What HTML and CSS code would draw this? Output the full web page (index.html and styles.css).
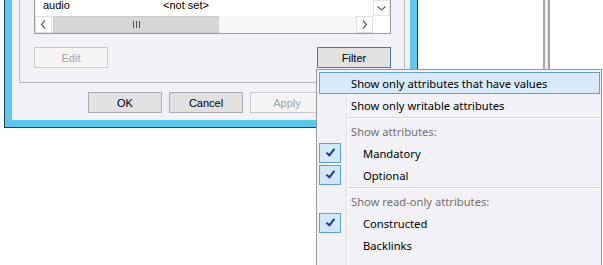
FILE: index.html
```html
<!DOCTYPE html>
<html lang="en">
<head>
    <meta charset="UTF-8">
    <title>Attribute Filter</title>
    <link rel="stylesheet" href="styles.css">
</head>
<body>

<div class="desk">
    <div class="dialog">
        <div class="client">
            <div class="page">
                <div class="list">
                    <div class="list-main">
                        <div class="rows">
                            <div class="row"><span class="col-name">audio</span><span class="col-value">&lt;not set&gt;</span></div>
                        </div>
                        <div class="hscroll">
                            <div class="sb-btn">
                                <svg width="7" height="9" viewBox="0 0 7 9"><polyline points="5,0.5 1.5,4.5 5,8.5" fill="none" stroke="#606060" stroke-width="1.2"/></svg>
                            </div>
                            <div class="sb-track">
                                <div class="sb-thumb">
                                    <svg width="7" height="7" viewBox="0 0 7 7"><path d="M0.5 0v7M3.5 0v7M6.5 0v7" stroke="#505050" stroke-width="1"/></svg>
                                </div>
                            </div>
                            <div class="sb-btn">
                                <svg width="7" height="9" viewBox="0 0 7 9"><polyline points="2,0.5 5.5,4.5 2,8.5" fill="none" stroke="#606060" stroke-width="1.2"/></svg>
                            </div>
                        </div>
                    </div>
                    <div class="vscroll">
                        <div class="sb-btn sb-down">
                            <svg width="9" height="7" viewBox="0 0 9 7"><polyline points="0.5,1.5 4.5,5 8.5,1.5" fill="none" stroke="#606060" stroke-width="1.2"/></svg>
                        </div>
                        <div class="sb-corner"></div>
                    </div>
                </div>
                <div class="page-btns">
                    <button class="btn" disabled>Edit</button>
                    <button class="btn btn-focus">Filter</button>
                </div>
            </div>
            <div class="dlg-btns">
                <button class="btn">OK</button>
                <button class="btn">Cancel</button>
                <button class="btn" disabled>Apply</button>
            </div>
        </div>
    </div>
    <div class="backbar"></div>
</div>

<div class="menu">
    <div class="item hot"><span class="check"></span><span class="label">Show only attributes that have values</span></div>
    <div class="item"><span class="check"></span><span class="label">Show only writable attributes</span></div>
    <div class="sep"></div>
    <div class="item header"><span class="check"></span><span class="label">Show attributes:</span></div>
    <div class="item"><span class="check on"></span><span class="label indent">Mandatory</span></div>
    <div class="item"><span class="check on"></span><span class="label indent">Optional</span></div>
    <div class="sep"></div>
    <div class="item header"><span class="check"></span><span class="label">Show read-only attributes:</span></div>
    <div class="item"><span class="check on"></span><span class="label indent">Constructed</span></div>
    <div class="item"><span class="check"></span><span class="label indent">Backlinks</span></div>
</div>

</body>
</html>
```

FILE: styles.css
```css
body {
    margin: 0;
    height: 265px;
    overflow: hidden;
    background: #fff;
    font-family: "Liberation Sans", Arial, sans-serif;
    font-size: 11px;
    color: #000;
}
.desk {
    display: flex;
    align-items: flex-start;
}

/* dialog window */
.dialog {
    box-sizing: border-box;
    width: 414px;
    height: 128px;
    margin-left: 4px;
    padding: 0 7px 7px;
    background: #5fc8ee;
    border: 1px solid #203f52;
    border-top: 0;
    display: flex;
}
.client {
    flex: 1;
    display: flex;
    flex-direction: column;
    justify-content: flex-end;
    padding: 0 5px 7px 7px;
    background: #f2f1f5;
}
.page {
    box-sizing: border-box;
    height: 83px;
    padding: 0 13px 14px 14px;
    border: 1px solid #bcbcbc;
    border-top: 0;
    display: flex;
    flex-direction: column;
}

/* list view */
.list {
    box-sizing: border-box;
    height: 34px;
    display: flex;
    background: #fff;
    border: 1px solid #9b9b9b;
    border-top: 0;
}
.list-main {
    flex: 1;
    min-width: 0;
    display: flex;
    flex-direction: column;
}
.rows {
    flex: 1;
}
.row {
    display: flex;
    line-height: 11px;
}
.col-name {
    width: 120px;
    margin-left: 8px;
}
.hscroll {
    height: 17px;
    display: flex;
}
.sb-btn {
    box-sizing: border-box;
    width: 17px;
    height: 17px;
    display: flex;
    align-items: center;
    justify-content: center;
    background: #fff;
    border: 1px solid #e2e2e2;
}
.sb-track {
    flex: 1;
    display: flex;
    background: #f7f7f7;
}
.sb-thumb {
    box-sizing: border-box;
    width: 166px;
    margin-left: 1px;
    display: flex;
    align-items: center;
    justify-content: center;
    background: #d6d6d6;
    border: 1px solid #cdcdcd;
}
.vscroll {
    width: 17px;
    display: flex;
    flex-direction: column;
}
.sb-down {
    height: 16px;
}
.sb-corner {
    flex: 1;
    background: #fff;
}

/* buttons */
.page-btns {
    display: flex;
    justify-content: space-between;
    margin-top: 13px;
}
.dlg-btns {
    display: flex;
    justify-content: flex-end;
    gap: 7px;
    margin-top: 9px;
    padding-right: 81px; /* Help button sits here, under the menu */
}
.btn {
    box-sizing: border-box;
    width: 74px;
    height: 21px;
    padding: 0;
    font: inherit;
    color: #000;
    background: #e1e1e1;
    border: 1px solid #adadad;
}
.btn:disabled {
    color: #a3a3a3;
    background: #f4f4f4;
    border-color: #c9c9c9;
}
.btn-focus {
    border-color: #3f7aa8;
}

.backbar {
    box-sizing: border-box;
    width: 7px;
    height: 265px;
    margin-left: 125px;
    background: #ececec;
    border-left: 2px solid #a9a9a9;
    border-right: 2px solid #a0a0a0;
}

/* context menu */
.menu {
    position: absolute;
    left: 316px;
    top: 69px;
    box-sizing: border-box;
    width: 286px;
    height: 196px;
    padding: 2px 1px 0 2px;
    overflow: hidden;
    background: #f2f1f5;
    border: 1px solid #979797;
    border-bottom: 0;
    font-family: "Noto Sans", "Open Sans", sans-serif;
    font-size: 11.2px;
}
.menu::before {
    content: "";
    position: absolute;
    left: 29px;
    top: 0;
    bottom: 0;
    width: 1px;
    background: #e0e0e2;
    box-shadow: 1px 0 #fff;
}
.item {
    position: relative;
    height: 22px;
    display: flex;
    align-items: center;
}
.item.hot {
    background: #d8eaf9;
    box-shadow: inset 0 0 0 1px #62a0d0;
}
.check {
    box-sizing: border-box;
    width: 27px;
    height: 20px;
    flex: none;
    display: flex;
    align-items: center;
    justify-content: center;
}
.check.on {
    width: 22px;
    margin-right: 5px;
    background: #d3e7f8;
    border: 1px solid #5aa3dc;
}
.check.on::after {
    content: "";
    width: 3px;
    height: 7px;
    margin-top: -3px;
    border: solid #1c3a8a;
    border-width: 0 2px 2px 0;
    transform: rotate(38deg);
}
.label {
    padding-left: 5px;
    white-space: nowrap;
}
.label.indent {
    padding-left: 17px;
}
.header {
    color: #727272;
}
.sep {
    box-sizing: border-box;
    height: 4px;
    margin-left: 27px;
    padding-top: 1px;
}
.sep::before {
    content: "";
    display: block;
    height: 1px;
    background: #d5d5d5;
    box-shadow: 0 1px #fff;
}
```
